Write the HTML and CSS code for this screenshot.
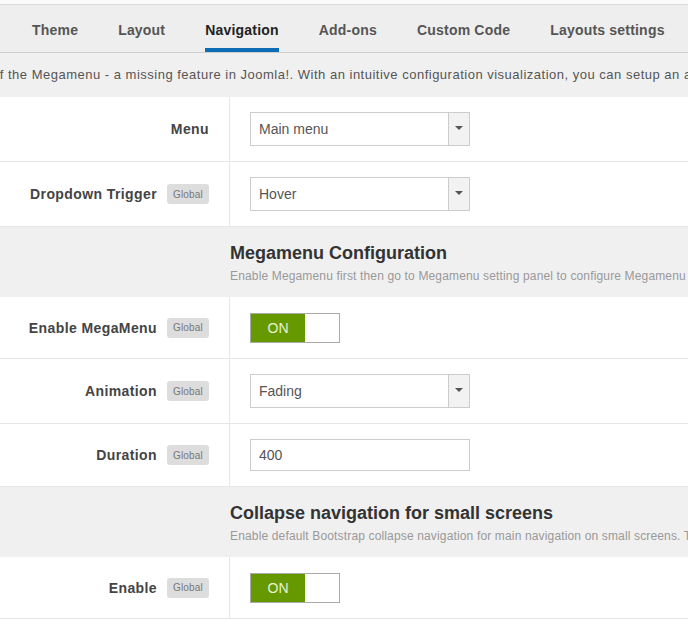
FILE: index.html
```html
<!DOCTYPE html>
<html>
<head>
<meta charset="utf-8">
<link rel="stylesheet" href="styles.css">
</head>
<body>
<div class="topgap"></div>
<nav class="tabs">
  <a class="tab">Theme</a>
  <a class="tab">Layout</a>
  <a class="tab active">Navigation</a>
  <a class="tab">Add-ons</a>
  <a class="tab">Custom Code</a>
  <a class="tab">Layouts settings</a>
</nav>
<div class="intro"><span class="intro-text">of the Megamenu - a missing feature in Joomla!. With an intuitive configuration visualization, you can setup an amazing megamenu easily.</span></div>

<div class="row">
  <div class="label-cell"><span class="label">Menu</span></div>
  <div class="control-cell">
    <div class="select"><span class="select-value">Main menu</span><span class="select-arrow"><i class="caret"></i></span></div>
  </div>
</div>
<div class="row">
  <div class="label-cell"><span class="label">Dropdown Trigger</span><span class="badge">Global</span></div>
  <div class="control-cell">
    <div class="select"><span class="select-value">Hover</span><span class="select-arrow"><i class="caret"></i></span></div>
  </div>
</div>

<div class="section">
  <h3 class="section-title">Megamenu Configuration</h3>
  <p class="section-desc">Enable Megamenu first then go to Megamenu setting panel to configure Megamenu</p>
</div>

<div class="row row-toggle">
  <div class="label-cell"><span class="label">Enable MegaMenu</span><span class="badge">Global</span></div>
  <div class="control-cell">
    <div class="toggle"><span class="toggle-on">ON</span><span class="toggle-off"></span></div>
  </div>
</div>
<div class="row">
  <div class="label-cell"><span class="label">Animation</span><span class="badge">Global</span></div>
  <div class="control-cell">
    <div class="select"><span class="select-value">Fading</span><span class="select-arrow"><i class="caret"></i></span></div>
  </div>
</div>
<div class="row">
  <div class="label-cell"><span class="label">Duration</span><span class="badge">Global</span></div>
  <div class="control-cell">
    <div class="input">400</div>
  </div>
</div>

<div class="section">
  <h3 class="section-title">Collapse navigation for small screens</h3>
  <p class="section-desc">Enable default Bootstrap collapse navigation for main navigation on small screens. The megamenu will be replaced.</p>
</div>

<div class="row row-toggle">
  <div class="label-cell"><span class="label">Enable</span><span class="badge">Global</span></div>
  <div class="control-cell">
    <div class="toggle"><span class="toggle-on">ON</span><span class="toggle-off"></span></div>
  </div>
</div>
</body>
</html>
```

FILE: styles.css
```css
* { box-sizing: border-box; }
html, body { margin: 0; padding: 0; }
body {
  background: #fff;
  font-family: "Liberation Sans", Arial, sans-serif;
  width: 688px;
  overflow: hidden;
}

.topgap {
  height: 5px;
  background: #fafafa;
  border-bottom: 1px solid #dcdcdc;
}

.tabs {
  display: flex;
  height: 48px;
  background: #eeeeee;
  border-bottom: 1px solid #cfcfcf;
  padding-left: 12px;
  white-space: nowrap;
}
.tab {
  margin: 0 20px;
  height: 47px;
  padding-top: 6px;
  border-bottom: 4px solid transparent;
  display: flex;
  align-items: center;
  font-size: 14px;
  font-weight: bold;
  letter-spacing: 0.2px;
  color: #555;
}
.tab.active {
  color: #222;
  border-bottom-color: #0c6db7;
}

.intro {
  height: 44px;
  background: #f0f0f0;
  overflow: hidden;
  white-space: nowrap;
  font-size: 13px;
  line-height: 44px;
  letter-spacing: 0.5px;
  color: #555;
}
.intro-text { display: inline-block; margin-left: -8px; }

.row {
  display: grid;
  grid-template-columns: 230px 1fr;
  border-bottom: 1px solid #e6e6e6;
}
.label-cell {
  border-right: 1px solid #e6e6e6;
  display: flex;
  justify-content: flex-end;
  align-items: center;
  gap: 10px;
  padding-right: 20px;
}
.label {
  font-size: 14px;
  font-weight: bold;
  letter-spacing: 0.4px;
  color: #444;
}
.badge {
  width: 42px;
  height: 20px;
  background: #dddddd;
  border-radius: 3px;
  color: #777;
  font-size: 10px;
  letter-spacing: 0.2px;
  display: flex;
  align-items: center;
  justify-content: center;
}
.control-cell {
  padding: 15px 20px;
  display: flex;
  align-items: center;
}
.row-toggle .control-cell { padding: 16px 20px 15px; }

.select {
  width: 220px;
  height: 34px;
  border: 1px solid #cccccc;
  background: #fff;
  display: flex;
  align-items: stretch;
}
.select-value {
  flex: 1;
  padding-left: 8px;
  display: flex;
  align-items: center;
  font-size: 14px;
  color: #555;
}
.select-arrow {
  width: 21px;
  background: #f2f2f2;
  border-left: 1px solid #cccccc;
  display: flex;
  justify-content: center;
  padding-top: 13px;
}
.caret {
  width: 0;
  height: 0;
  border-left: 4px solid transparent;
  border-right: 4px solid transparent;
  border-top: 4px solid #555;
}

.input {
  width: 220px;
  height: 32px;
  border: 1px solid #cccccc;
  padding-left: 8px;
  display: flex;
  align-items: center;
  font-size: 14px;
  color: #555;
}

.toggle {
  width: 90px;
  height: 30px;
  border: 1px solid #aaaaaa;
  display: flex;
}
.toggle-on {
  width: 54px;
  background: #669900;
  color: #e8f3d2;
  font-size: 14px;
  display: flex;
  align-items: center;
  justify-content: center;
}
.toggle-off { flex: 1; background: #fff; }

.section {
  background: #f0f0f0;
  height: 70px;
  padding: 15px 0 0 230px;
  white-space: nowrap;
  overflow: hidden;
}
.section-title {
  margin: 0;
  font-size: 18px;
  line-height: 22px;
  font-weight: bold;
  color: #333;
}
.section-desc {
  margin: 4px 0 0;
  font-size: 12px;
  line-height: 16px;
  letter-spacing: 0.15px;
  color: #999;
}
```
